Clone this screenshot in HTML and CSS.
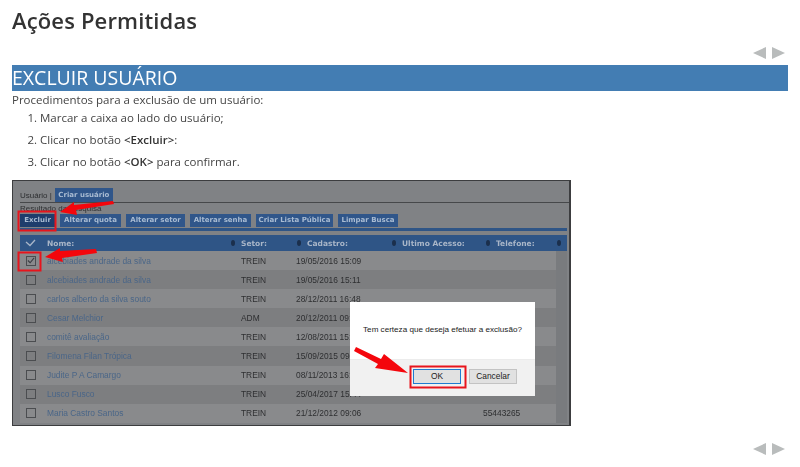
FILE: index.html
```html
<!DOCTYPE html>
<html lang="pt-BR">
<head>
<meta charset="utf-8">
<title>Ações Permitidas</title>
<link rel="stylesheet" href="styles.css">
</head>
<body>
<main class="page">
  <h1 class="title">Ações Permitidas</h1>
  <div class="nav nav-top">
    <svg width="32" height="12" viewBox="0 0 32 12"><path class="tri" d="M0 6 13 0V12Z"/><path class="tri" d="M32 6 19 0V12Z"/></svg>
  </div>
  <h2 class="banner">EXCLUIR USUÁRIO</h2>
  <p class="intro">Procedimentos para a exclusão de um usuário:</p>
  <ol class="steps">
    <li>Marcar a caixa ao lado do usuário;</li>
    <li>Clicar no botão <b>&lt;Excluir&gt;</b>:</li>
    <li>Clicar no botão <b>&lt;OK&gt;</b> para confirmar.</li>
  </ol>

  <figure class="shot">
    <div class="shot-inner">
      <div class="tabs">
        <span class="tab-label">Usuário |</span>
        <span class="tab">Criar usuário</span>
      </div>
      <div class="result-label">Resultado da pesquisa</div>
      <div class="actions">
        <span class="btn w35">Excluir</span>
        <span class="btn w61">Alterar quota</span>
        <span class="btn w59">Alterar setor</span>
        <span class="btn w61">Alterar senha</span>
        <span class="btn w77">Criar Lista Pública</span>
        <span class="btn w60">Limpar Busca</span>
      </div>
      <div class="rule"></div>
      <div class="thead">
        <span class="check"><svg width="11" height="8" viewBox="0 0 11 8"><path d="M1 3 5 6.5 10 1" fill="none" stroke="#a9b6c8" stroke-width="1.3"/></svg></span>
        <span class="sort">Nome:</span>
        <span class="sort">Setor:</span>
        <span class="sort">Cadastro:</span>
        <span class="sort">Ultimo Acesso:</span>
        <span class="sort">Telefone:</span>
      </div>
      <div class="tbody">
        <div class="row tr"><span class="check"><i class="box ticked"><svg width="9" height="9" viewBox="0 0 9 9"><path d="M1 4.5 3.5 7 8 1.5" fill="none" stroke="#3a3d42" stroke-width="1.2"/></svg></i></span><span class="name">alcebiades andrade da silva</span><span>TREIN</span><span>19/05/2016 15:09</span><span></span><span></span></div>
        <div class="row tr"><span class="check"><i class="box"></i></span><span class="name">alcebiades andrade da silva</span><span>TREIN</span><span>19/05/2016 15:11</span><span></span><span></span></div>
        <div class="row tr"><span class="check"><i class="box"></i></span><span class="name">carlos alberto da silva souto</span><span>TREIN</span><span>28/12/2011 16:48</span><span></span><span></span></div>
        <div class="row tr"><span class="check"><i class="box"></i></span><span class="name">Cesar Melchior</span><span>ADM</span><span>20/12/2011 09:12</span><span></span><span></span></div>
        <div class="row tr"><span class="check"><i class="box"></i></span><span class="name">comitê avaliação</span><span>TREIN</span><span>12/08/2011 15:20</span><span></span><span></span></div>
        <div class="row tr"><span class="check"><i class="box"></i></span><span class="name">Filomena Filan Trópica</span><span>TREIN</span><span>15/09/2015 09:30</span><span></span><span></span></div>
        <div class="row tr"><span class="check"><i class="box"></i></span><span class="name">Judite P A Camargo</span><span>TREIN</span><span>08/11/2013 16:02</span><span></span><span></span></div>
        <div class="row tr"><span class="check"><i class="box"></i></span><span class="name">Lusco Fusco</span><span>TREIN</span><span>25/04/2017 15:44</span><span></span><span></span></div>
        <div class="row tr"><span class="check"><i class="box"></i></span><span class="name">Maria Castro Santos</span><span>TREIN</span><span>21/12/2012 09:06</span><span></span><span>55443265</span></div>
      </div>
    </div>

    <div class="dialog">
      <div class="dialog-body">Tem certeza que deseja efetuar a exclusão?</div>
      <div class="dialog-foot">
        <span class="dlg-btn ok">OK</span>
        <span class="dlg-btn">Cancelar</span>
      </div>
    </div>

    <svg class="marks" width="559" height="246" viewBox="0 0 559 246">
      <g fill="none" stroke="#e8141c" stroke-width="2">
        <rect x="5.5" y="30.5" width="37" height="19"/>
        <rect x="5.5" y="71.5" width="22" height="18"/>
        <rect x="397.5" y="185.5" width="55" height="21"/>
      </g>
      <g fill="#f4060c">
        <path d="M47 31 61 21V24L100 20 101 23 63 29 64 34Z"/>
        <path d="M32 76 47 67V70L83 68 84 72 49 77 50 81Z"/>
        <path d="M395 192 371 173 368 178 343 166 341 170 365 183 362 187Z"/>
      </g>
    </svg>
  </figure>

  <div class="nav nav-bottom">
    <svg width="32" height="12" viewBox="0 0 32 12"><path class="tri" d="M0 6 13 0V12Z"/><path class="tri" d="M32 6 19 0V12Z"/></svg>
  </div>
</main>
</body>
</html>
```

FILE: styles.css
```css
* { box-sizing: border-box; }
html, body { margin: 0; background: #fff; }
body { font-family: "Open Sans", sans-serif; color: #333; width: 800px; height: 467px; overflow: hidden; }
.page { padding: 0 12px; filter: blur(.35px); }
.title { margin: 0; padding-top: 5px; height: 44px; font-size: 22px; line-height: 30px; font-weight: 600; letter-spacing: .15px; color: #333; }
.nav { display: flex; justify-content: flex-end; padding-right: 3px; height: 12px; }
.nav-top { margin-top: 3px; }
.nav-bottom { margin-top: 17px; }
.tri { fill: #b9bcbc; }
.banner { margin: 6px 0 0; height: 26px; width: 776px; background: #437db3; color: #fff; font-size: 19.5px; line-height: 26px; font-weight: 500; }
.intro { margin: 0; font-size: 11.5px; line-height: 17px; color: #444; }
.steps { margin: 0; padding: 1px 0 0 28px; height: 72px; font-size: 11.5px; line-height: 17px; color: #444; }
.steps li { margin-bottom: 5px; }
.steps b { font-weight: 600; color: #333; }

.shot { position: relative; margin: 0; width: 559px; height: 246px; border: 1px solid #3c3d3f; border-width: 1px 2px 1px 1px; background: #808285; overflow: hidden; font-family: "Liberation Sans", sans-serif; }
.shot-inner { padding: 7px 0 0 7px; }
.tabs { display: flex; align-items: flex-end; gap: 3px; height: 15px; border-bottom: 1px solid #46484a; margin-right: -7px; font-size: 8px; color: #2c2e30; }
.tab-label { line-height: 13px; }
.tab { width: 58px; height: 14px; background: #30568a; color: #a8bbd2; font-family: "DejaVu Sans", sans-serif; font-size: 7px; font-weight: 700; line-height: 14px; text-align: center; }
.result-label { font-size: 8px; line-height: 10px; height: 10px; margin-top: 1px; color: #2c2e30; }
.actions { display: flex; gap: 5px; height: 13px; }
.btn { display: block; height: 13px; background: #30568a; color: #a8bbd2; font-family: "DejaVu Sans", sans-serif; font-size: 7px; font-weight: 700; line-height: 13px; text-align: center; white-space: nowrap; }
.w35 { width: 35px; background: #1e3d6c; }
.w59 { width: 59px; }
.w60 { width: 60px; }
.w61 { width: 61px; }
.w77 { width: 77px; }
.rule { height: 3px; margin-top: 1px; width: 547px; background: #2f5586; }
.thead { display: grid; grid-template-columns: 27px 194px 66px 95px 94px 71px; align-items: center; width: 547px; height: 16px; margin-top: 4px; background: #2f5586; color: #a9b6c8; font-family: "DejaVu Sans", sans-serif; font-size: 7.5px; font-weight: 700; }
.sort { display: flex; justify-content: space-between; align-items: center; padding-right: 6px; }
.sort::after { content: ""; width: 4px; height: 6px; border-radius: 50%; background: #1b2f4c; }
.row { display: grid; grid-template-columns: 27px 194px 55px 106px 81px 73px; align-items: center; }
.check { display: flex; justify-content: center; padding-right: 6px; }
.tbody { width: 547px; height: 172px; background: #797b7e; }
.tr { width: 536px; height: 19.1px; background: #898a8c; font-size: 8.4px; color: #2e2f31; }
.tr:nth-child(even) { background: #7d7e80; }
.name { color: #4a6688; }
.box { display: inline-flex; align-items: center; justify-content: center; width: 10px; height: 10px; border: 1px solid #4b4d50; }

.dialog { position: absolute; left: 337px; top: 121px; width: 185px; height: 94px; background: #fff; display: flex; flex-direction: column; }
.dialog-body { height: 57px; padding-top: 22px; font-size: 8.1px; line-height: 12px; text-align: center; color: #222; }
.dialog-foot { flex: 1; display: flex; gap: 8px; justify-content: flex-end; padding: 9px 18px 0 0; background: #f1f1f1; border-top: 1px solid #ececec; }
.dlg-btn { width: 48px; height: 15px; background: #e1e1e1; border: 1px solid #c3c3c3; font-size: 8.4px; line-height: 13px; text-align: center; color: #222; }
.dlg-btn.ok { border: 1px solid #1f7bd0; }

.marks { position: absolute; left: 0; top: 0; }
```
